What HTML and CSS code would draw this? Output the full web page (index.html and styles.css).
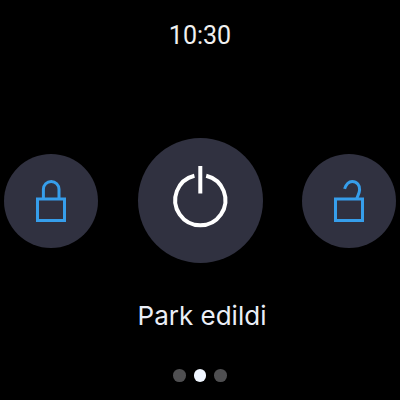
FILE: index.html
```
<!DOCTYPE html>
<html lang="tr">
<head>
<meta charset="utf-8">
<title>Park</title>
<link rel="stylesheet" href="styles.css">
</head>
<body>
<main class="watch">
  <time class="clock">10:30</time>
  <div class="controls">
    <button class="control" aria-label="Kilitle">
      <svg viewBox="0 0 94 94"><rect x="33.5" y="45" width="27" height="21.5"/><path d="M39.4 45V35.2a7.8 7.8 0 0 1 15.6 0V45"/></svg>
    </button>
    <button class="control power" aria-label="Motor">
      <svg viewBox="0 0 125 125"><path d="M56.4 37.7A25.1 25.1 0 1 0 68.2 37.7M62.3 28V55.6"/></svg>
    </button>
    <button class="control" aria-label="Kilidi aç">
      <svg viewBox="0 0 94 94"><rect x="33.5" y="45" width="27" height="21.5"/><path d="M42.6 34.9C44.2 30 46.9 27.4 50.2 27.4C54.9 27.4 58 31.3 57.6 35.8C57.4 39.5 55.6 41.5 54.7 45"/></svg>
    </button>
  </div>
  <p class="status">Park edildi</p>
  <nav class="dots"><i class="dot"></i><i class="dot active"></i><i class="dot"></i></nav>
</main>
</body>
</html>
```
FILE: styles.css
```
body {
  margin: 0;
  background: #000;
}

.watch {
  width: 400px;
  height: 400px;
  overflow: hidden;
  display: flex;
  flex-direction: column;
  align-items: center;
  color: #f0f0f0;
}

.clock {
  margin-top: 21px;
  font: 25px/30px Roboto, sans-serif;
  height: 30px;
}

.controls {
  margin-top: 86.5px;
  width: 392px;
  height: 125px;
  display: flex;
  align-items: center;
  justify-content: space-between;
}

.control {
  width: 94px;
  height: 94px;
  padding: 0;
  border: 0;
  border-radius: 50%;
  background: #303140;
  color: #369eeb;
  margin-top: 1px;
}

.control svg {
  display: block;
  width: 100%;
  height: 100%;
  fill: none;
  stroke: currentColor;
  stroke-width: 3;
}

.power {
  width: 125px;
  height: 125px;
  color: #fff;
  margin-top: 0;
}

.power svg {
  stroke-width: 4;
}

.status {
  margin: 35.5px 0 0 4px;
  height: 36px;
  font: 400 26px/36px Inter, sans-serif;
  color: #eaeef7;
}

.dots {
  margin-top: 35px;
  display: flex;
  gap: 8px;
}

.dot {
  width: 12.6px;
  height: 12.6px;
  border-radius: 50%;
  background: #4f4f51;
}

.active {
  background: #f0f6ff;
}
```
